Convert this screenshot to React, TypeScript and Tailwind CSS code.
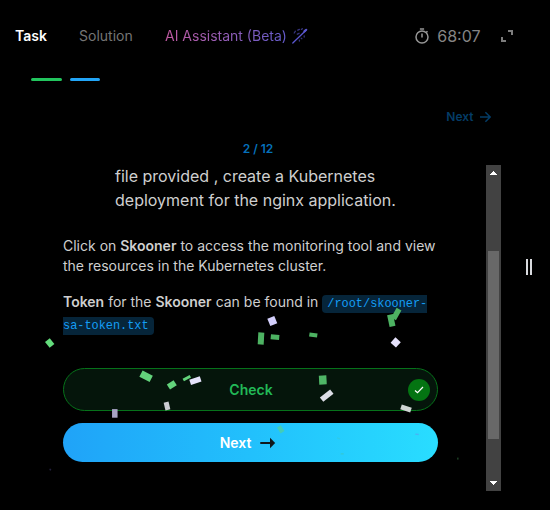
import React from "react";

type Piece = { x: number; y: number; w: number; h: number; r: number; c: string };

const confetti: Piece[] = [
  { x: 49.7, y: 343, w: 6, h: 7.5, r: -38, c: "#63dc7c" },
  { x: 272.3, y: 321, w: 7.5, h: 8, r: -22, c: "#d3cffc" },
  { x: 261, y: 338.5, w: 6, h: 12, r: 3, c: "#4db262" },
  { x: 275, y: 337.2, w: 8.5, h: 5, r: 5, c: "#4db262" },
  { x: 313.3, y: 335, w: 8, h: 4, r: 8, c: "#4db262" },
  { x: 396.3, y: 314, w: 5.5, h: 11, r: 30, c: "#4db262" },
  { x: 391.3, y: 320.5, w: 6, h: 12, r: -12, c: "#4db262" },
  { x: 395.7, y: 342.4, w: 7.2, h: 7.2, r: 42, c: "#e6e2fc" },
  { x: 146.1, y: 376.3, w: 11.5, h: 7, r: 27, c: "#63d37b" },
  { x: 171.8, y: 384.8, w: 8, h: 6, r: -32, c: "#63d37b" },
  { x: 186.8, y: 378.1, w: 8, h: 3, r: -28, c: "#63d37b" },
  { x: 195.4, y: 380.6, w: 11, h: 5.5, r: -18, c: "#e6e2fc" },
  { x: 167, y: 406, w: 5, h: 8, r: -13, c: "#cccdd3" },
  { x: 114.8, y: 413.4, w: 5.5, h: 8.6, r: 0, c: "#a8a3c4" },
  { x: 322.8, y: 380, w: 7.5, h: 9, r: -3, c: "#4fb566" },
  { x: 326.7, y: 395.6, w: 13, h: 5.5, r: -38, c: "#dcdde6" },
  { x: 406, y: 408.5, w: 10.5, h: 5, r: 18, c: "#cfd5d3" },
  { x: 280.7, y: 429.3, w: 4.5, h: 7, r: -32, c: "#43cdb8" },
  { x: 338.5, y: 438.4, w: 3, h: 1.2, r: 20, c: "#2fcbe8" },
  { x: 342.2, y: 453.8, w: 3, h: 1.6, r: 0, c: "#31c9dd" },
  { x: 417, y: 434.3, w: 3.5, h: 1.4, r: 5, c: "#48b4f5" },
  { x: 50.3, y: 469.6, w: 1.6, h: 1.6, r: 20, c: "#24203f" },
  { x: 457.8, y: 458.6, w: 1.6, h: 2, r: 0, c: "#1b3b22" },
];

function Confetti() {
  return (
    <svg className="pointer-events-none absolute inset-0" width="550" height="510">
      {confetti.map((p, i) => (
        <rect
          key={i}
          x={p.x - p.w / 2}
          y={p.y - p.h / 2}
          width={p.w}
          height={p.h}
          fill={p.c}
          transform={`rotate(${p.r} ${p.x} ${p.y})`}
        />
      ))}
    </svg>
  );
}

function Wand() {
  return (
    <svg className="ml-1" width="18" height="18" viewBox="0 0 18 18" fill="none" stroke="#5b57cf" strokeLinecap="round">
      <path d="M1.8 16 15 3.2" strokeWidth="1.3" />
      <path d="M3.2 6l1.2-1.8M6.3 7.2l1.8-.9M6.8 3.2l1.6-.8M10.4 2.4l1-.6M13.2 8.8v1.2M10.2 11.2l.7.5M8.4 13.2v.8" strokeWidth="1.3" strokeOpacity=".6" />
      <path d="M13.4 4.4 15.2 2.8" strokeWidth="2.2" />
    </svg>
  );
}

function Stopwatch() {
  return (
    <svg width="16" height="16" viewBox="0 0 16 16" fill="none" stroke="#969696" strokeWidth="1.5">
      <circle cx="8" cy="9" r="6" />
      <path d="M5.9.9h4.2M8 5.4V9.6M12.3 4.4l1.2-1.2" />
    </svg>
  );
}

function Expand() {
  return (
    <svg width="12" height="12" viewBox="0 0 12 12" fill="none" stroke="#7d7d7d" strokeWidth="2">
      <path d="M7 1h4v4M1 7v4h4" />
    </svg>
  );
}

function Scrollbar() {
  return (
    <div className="flex h-[326px] w-[15px] flex-col items-center bg-[#424242]">
      <svg width="15" height="15" viewBox="0 0 15 15" shapeRendering="crispEdges">
        <path d="M7 6h1v1H7zM6 7h3v1H6zM5 8h5v1H5zM4 9h7v1H4z" fill="#fff" />
      </svg>
      <div className="mt-[71px] mb-auto h-[188px] w-[11px] bg-[#686868]" />
      <svg width="15" height="15" viewBox="0 0 15 15" shapeRendering="crispEdges">
        <path d="M4 5h7v1H4zM5 6h5v1H5zM6 7h3v1H6zM7 8h1v1H7z" fill="#fff" />
      </svg>
    </div>
  );
}

export default function App() {
  return (
    <div className="relative h-[510px] w-[550px] overflow-hidden bg-black font-['Inter',sans-serif] text-[#cfcfcf]">
      <header className="flex h-[72px] items-center pl-[15px] text-sm">
        <span className="w-[64px] font-semibold text-white">Task</span>
        <span className="w-[86px] text-[#757575]">Solution</span>
        <span className="bg-linear-to-r from-[#c058a0] to-[#625acb] bg-clip-text text-transparent">
          AI Assistant (Beta)
        </span>
        <Wand />
        <div className="mr-[37px] ml-auto flex items-center">
          <Stopwatch />
          <span className="mr-[20.5px] ml-[7.5px] text-base text-[#858585]">68:07</span>
          <Expand />
        </div>
      </header>
      <div className="flex gap-2 pt-[6px] pl-[31px]">
        <div className="h-[3px] w-[31px] rounded-full bg-[#22c55e]" />
        <div className="h-[3px] w-[30px] rounded-full bg-[#22a5f7]" />
      </div>
      <div className="mt-[26px] flex h-5 items-center justify-end pr-[59.5px] text-xs font-semibold text-[#043c66]">
        Next
        <svg className="ml-[6px]" width="11" height="12" viewBox="0 0 11 12" fill="none" stroke="currentColor" strokeWidth="1.5">
          <path d="M0 6h10M5.4 1.2 10.2 6l-4.8 4.8" />
        </svg>
      </div>
      <div className="mt-[14px] w-[516px] text-center text-xs leading-4 font-semibold text-[#0570bb]">2 / 12</div>
      <div className="mt-[7px] flex">
        <main className="ml-[63px] w-[375px] text-sm leading-5">
          <p className="pl-[52px] text-base leading-6">
            file provided , create a Kubernetes
            <br />
            deployment for the nginx application.
          </p>
          <p className="mt-6">
            Click on <b className="font-semibold">Skooner</b> to access the monitoring tool and view
            <br />
            the resources in the Kubernetes cluster.
          </p>
          <p className="mt-[15px] h-11 leading-[22px]">
            <b className="font-semibold">Token</b> for the <b className="font-semibold">Skooner</b> can be found in{" "}
            <code className="rounded-sm bg-[#06253a] px-[5px] py-[2px] font-['Liberation_Mono',monospace] text-[11.9px] leading-4 text-[#149df5]">
              /root/skooner-
              <wbr />
              sa-token.txt
            </code>
          </p>
          <button className="mt-[33px] flex h-[43px] w-full items-center justify-center rounded-full border border-[#06721a] bg-[#05150b] pr-[7px] text-sm font-semibold text-[#22b957]">
            <span className="flex-1 pl-[30px] text-center">Check</span>
            <span className="flex size-[22px] items-center justify-center rounded-full bg-[#047412]">
              <svg width="10" height="8" viewBox="0 0 10 8" fill="none" stroke="#fff" strokeWidth="1.2">
                <path d="M1 4.5 3.5 6.7 9 1" />
              </svg>
            </span>
          </button>
          <button className="mt-3 flex h-[39px] w-full items-center justify-center gap-[9px] rounded-full bg-linear-to-r from-[#20a3f8] to-[#29ddff] pr-[5px] text-sm font-semibold text-white">
            Next
            <svg width="16" height="12" viewBox="0 0 16 12">
              <path d="M1 6h10" stroke="#10181c" strokeWidth="2" strokeLinecap="round" />
              <path d="M10 .8 15.2 6 10 11.2z" fill="#10181c" />
            </svg>
          </button>
        </main>
        <div className="ml-[48px] pt-[1px]">
          <Scrollbar />
        </div>
        <div className="mt-[95px] ml-[25px] flex h-4 gap-[2px]">
          <div className="w-[2px] bg-[#d8dade]" />
          <div className="w-[2px] bg-[#d8dade]" />
        </div>
      </div>
      <Confetti />
    </div>
  );
}
